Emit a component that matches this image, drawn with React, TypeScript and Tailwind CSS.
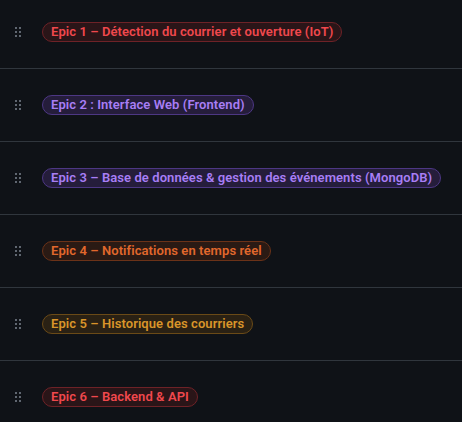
const epics = [
  { title: "Epic 1 – Détection du courrier et ouverture (IoT)", tone: "red" },
  { title: "Epic 2 : Interface Web (Frontend)", tone: "purple" },
  { title: "Epic 3 – Base de données & gestion des événements (MongoDB)", tone: "purple" },
  { title: "Epic 4 – Notifications en temps réel", tone: "orange" },
  { title: "Epic 5 – Historique des courriers", tone: "yellow" },
  { title: "Epic 6 – Backend & API", tone: "red" },
];

const toneClasses: Record<string, string> = {
  red: "text-[#f0484d] bg-[#2a1518] border-[#6e2227]",
  purple: "text-[#a87ef5] bg-[#251d3b] border-[#4d3784]",
  orange: "text-[#e1682c] bg-[#2a1a14] border-[#6b3218]",
  yellow: "text-[#d9952a] bg-[#2a2114] border-[#6a4a17]",
};

function Grabber() {
  return (
    <svg width="16" height="16" viewBox="0 0 16 16" className="fill-[#7d8590] shrink-0">
      <path d="M10 13a1 1 0 1 1 0-2 1 1 0 0 1 0 2Zm-4 0a1 1 0 1 1 0-2 1 1 0 0 1 0 2Zm0-4a1 1 0 1 1 0-2 1 1 0 0 1 0 2Zm4 0a1 1 0 1 1 0-2 1 1 0 0 1 0 2Zm0-4a1 1 0 1 1 0-2 1 1 0 0 1 0 2ZM6 5a1 1 0 1 1 0-2 1 1 0 0 1 0 2Z" />
    </svg>
  );
}

export default function App() {
  return (
    <div className="w-[462px] h-[422px] overflow-hidden bg-[#0f1217] font-['Roboto',sans-serif]">
      <div className="-mt-1">
        {epics.map((e) => (
          <div key={e.title} className="h-[73px] flex items-center pl-[10px] gap-4 border-b border-[#30363d]">
            <Grabber />
            <span
              className={`h-5 px-2 inline-flex items-center rounded-full border text-[13px] leading-[18px] font-semibold tracking-[0.08px] whitespace-nowrap ${toneClasses[e.tone]}`}
            >
              {e.title}
            </span>
          </div>
        ))}
      </div>
    </div>
  );
}
